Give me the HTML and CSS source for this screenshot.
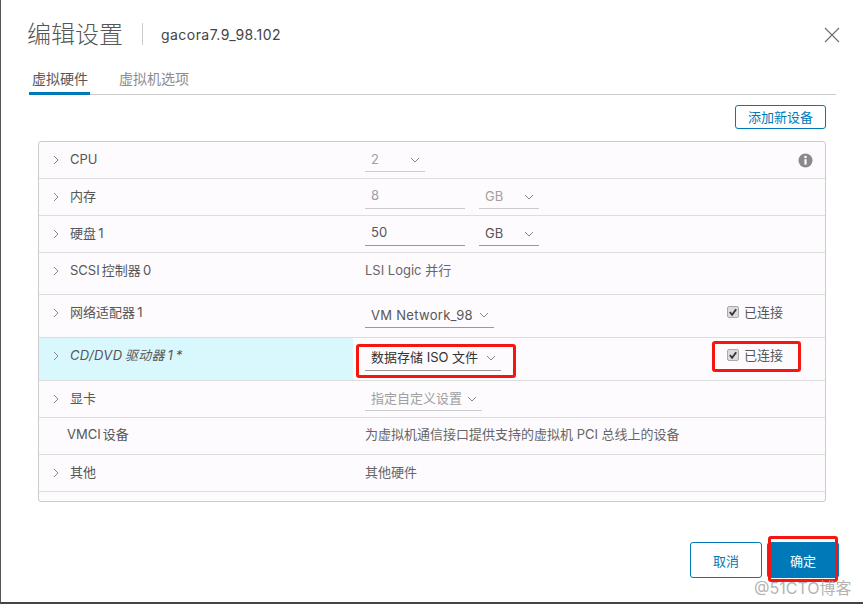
FILE: index.html
```html
<!DOCTYPE html>
<html lang="zh-CN">
<head>
<meta charset="utf-8">
<title>编辑设置</title>
<link rel="stylesheet" href="styles.css">
</head>
<body>
<div class="dialog">
  <header class="head">
    <h1 class="title">编辑设置</h1>
    <span class="vm">gacora7.9_98.102</span>
    <svg class="close" width="16" height="16" viewBox="0 0 16 16"><path d="M1 1L15 15M15 1L1 15" stroke="#6f6f6f" stroke-width="1.2" fill="none"/></svg>
  </header>
  <nav class="tabs">
    <span class="tab active">虚拟硬件</span>
    <span class="tab">虚拟机选项</span>
  </nav>
  <div class="toolbar"><button class="add">添加新设备</button></div>
  <section class="grid">
    <div class="row h37">
      <div class="label"><svg class="chev" viewBox="0 0 6 10"><path d="M1 1l4 4-4 4"/></svg>CPU</div>
      <div class="val"><span class="sel w60 dim">2<svg class="down" viewBox="0 0 10 6"><path d="M1 1l4 4 4-4"/></svg></span></div>
      <svg class="info" width="15" height="15" viewBox="0 0 15 15"><circle cx="7.5" cy="7.5" r="7" fill="#8a8a8a"/><rect x="6.4" y="6.2" width="2.2" height="5.4" fill="#fff"/><circle cx="7.5" cy="4" r="1.3" fill="#fff"/></svg>
    </div>
    <div class="row h37">
      <div class="label"><svg class="chev" viewBox="0 0 6 10"><path d="M1 1l4 4-4 4"/></svg>内存</div>
      <div class="val"><span class="inp dim">8</span><span class="sel w60 dim">GB<svg class="down" viewBox="0 0 10 6"><path d="M1 1l4 4 4-4"/></svg></span></div>
    </div>
    <div class="row h37">
      <div class="label"><svg class="chev" viewBox="0 0 6 10"><path d="M1 1l4 4-4 4"/></svg>硬盘 1</div>
      <div class="val"><span class="inp strong">50</span><span class="sel w60 strong">GB<svg class="down" viewBox="0 0 10 6"><path d="M1 1l4 4 4-4"/></svg></span></div>
    </div>
    <div class="row h42">
      <div class="label"><svg class="chev" viewBox="0 0 6 10"><path d="M1 1l4 4-4 4"/></svg>SCSI 控制器 0</div>
      <div class="val text">LSI Logic 并行</div>
    </div>
    <div class="row h43">
      <div class="label"><svg class="chev" viewBox="0 0 6 10"><path d="M1 1l4 4-4 4"/></svg>网络适配器 1</div>
      <div class="val"><span class="sel w129 strong">VM Network_98<svg class="down" viewBox="0 0 10 6"><path d="M1 1l4 4 4-4"/></svg></span></div>
      <label class="conn"><span class="box"><svg viewBox="0 0 11 11"><path d="M2 5.5l2.5 3L9 2.5"/></svg></span>已连接</label>
    </div>
    <div class="row h43 edited">
      <div class="label"><svg class="chev" viewBox="0 0 6 10"><path d="M1 1l4 4-4 4"/></svg>CD/DVD 驱动器 1 *</div>
      <div class="val"><span class="sel w136 black">数据存储 ISO 文件<svg class="down" viewBox="0 0 10 6"><path d="M1 1l4 4 4-4"/></svg></span></div>
      <label class="conn"><span class="box"><svg viewBox="0 0 11 11"><path d="M2 5.5l2.5 3L9 2.5"/></svg></span>已连接</label>
    </div>
    <div class="row h37">
      <div class="label"><svg class="chev" viewBox="0 0 6 10"><path d="M1 1l4 4-4 4"/></svg>显卡</div>
      <div class="val"><span class="sel w117 dim">指定自定义设置<svg class="down" viewBox="0 0 10 6"><path d="M1 1l4 4 4-4"/></svg></span></div>
    </div>
    <div class="row h37 vmci">
      <div class="label plain">VMCI 设备</div>
      <div class="val text">为虚拟机通信接口提供支持的虚拟机 PCI 总线上的设备</div>
    </div>
    <div class="row h37">
      <div class="label"><svg class="chev" viewBox="0 0 6 10"><path d="M1 1l4 4-4 4"/></svg>其他</div>
      <div class="val text">其他硬件</div>
    </div>
  </section>
  <footer class="foot">
    <button class="btn cancel">取消</button>
    <button class="btn ok">确定</button>
  </footer>
</div>
<div class="mark m1"></div>
<div class="mark m2"></div>
<div class="mark m3"></div>
<div class="wm">@51CTO博客</div>
</body>
</html>
```

FILE: styles.css
```css
* { box-sizing: border-box; }
html, body { margin: 0; padding: 0; }
body {
  width: 863px; height: 604px; overflow: hidden; position: relative;
  background: #fff;
  font-family: "Inter", "Noto Sans CJK SC", sans-serif;
  font-size: 13px; color: #565656;
}
.dialog {
  width: 863px; height: 604px;
  padding: 0 0 0 1px;
  border-left: 1px solid #555;
  border-bottom: 2px solid #444;
  display: flex; flex-direction: column;
}
.head { height: 68px; padding: 17px 23px 0 25px; display: flex; align-items: flex-start; }
.title {
  margin: 3px 0 0; padding-right: 20px; font-size: 24px; font-weight: 300; line-height: 30px; color: #565656;
  position: relative;
}
.title::after { content: ""; position: absolute; right: 0; top: 3px; width: 1px; height: 22px; background: #ccc; }
.vm { margin: 9px 0 0 18px; font-size: 14px; line-height: 17px; letter-spacing: 0.45px; color: #444; flex: 1; }
.close { margin-top: 10px; }
.tabs { height: 27px; margin: 0 0 0 27px; width: 807px; border-bottom: 1px solid #ccc; display: flex; }
.tab { margin-right: 27px; font-size: 14px; line-height: 21px; color: #8c8c8c; height: 27px; padding-left: 2px; white-space: nowrap; }
.tab.active { width: 61px; padding-left: 3px; color: #565656; border-bottom: 3px solid #0079b8; }
.toolbar { height: 46px; padding: 10px 37px 0 0; display: flex; justify-content: flex-end; align-items: flex-start; }
.add {
  width: 91px; height: 24px; background: #fff; border: 1px solid #0079b8; border-radius: 3px; padding: 0 0 2px;
  font: inherit; color: #0079b8;
}
.grid {
  margin-left: 36px; width: 788px; height: 361px;
  border: 1px solid #ccc; border-radius: 3px; background: #fdfbfe;
  display: flex; flex-direction: column;
}
.row { position: relative; display: flex; border-bottom: 1px solid #ddd; flex: none; }
.h37 { height: 37px; }
.h42 { height: 42px; }
.h43 { height: 43px; }
.label { width: 326px; padding: 9px 0 0 14px; display: flex; align-items: flex-start; line-height: 17px; color: #565656; white-space: pre; word-spacing: -1.5px; }
.label.plain { padding-left: 28px; }
.chev { width: 6px; height: 10px; margin: 4px 11px 0 0; flex: none; }
.chev path, .down path { fill: none; stroke: #888; stroke-width: 1; }
.val { display: flex; align-items: flex-start; gap: 14px; padding-top: 4px; }
.val.text { padding-top: 9px; line-height: 17px; color: #666; }
.vmci .label, .vmci .val.text { padding-top: 8px; }
.inp { display: block; width: 100px; height: 26px; padding: 4px 0 0 6px; border-bottom: 1px solid #aaa; line-height: 17px; }
.sel { position: relative; display: block; height: 26px; padding: 5px 0 0 6px; border-bottom: 1px solid #aaa; line-height: 17px; white-space: nowrap; }
.down { position: absolute; right: 5px; top: 11px; width: 10px; height: 6px; }
.w60 { width: 60px; }
.w129 { width: 129px; letter-spacing: 0.3px; }
.w136 { width: 136px; }
.w117 { width: 117px; }
.dim { color: #a0a0a0; border-bottom-color: #ccc; }
.strong { color: #565656; border-bottom-color: #999; }
.black { color: #333; border-bottom-color: #999; }
.h43 .val { padding-top: 6px; }
.h43 .sel { height: 27px; }
.h43 .w129 { padding-top: 6px; }
.edited { background: linear-gradient(90deg, #d9f8fd 0 314px, transparent 314px); }
.edited .label { font-style: italic; letter-spacing: 0.35px; }
.conn { position: absolute; left: 688px; top: 9px; display: flex; align-items: flex-start; line-height: 17px; color: #565656; }
.box { width: 12px; height: 12px; margin: 2px 5px 0 0; background: #dcdcdc; border: 1px solid #aaa; border-radius: 2px; display: block; }
.box svg { display: block; width: 10px; height: 10px; }
.box path { fill: none; stroke: #333; stroke-width: 2; }
.info { position: absolute; right: 12px; top: 11px; }
.foot { flex: 1; display: flex; justify-content: flex-end; gap: 5px; padding: 40px 24px 0 0; align-items: flex-start; }
.btn { width: 72px; height: 36px; border-radius: 3px; font: inherit; padding: 0; }
.cancel { background: #fff; border: 1px solid #0079b8; color: #0079b8; }
.ok { background: #0079b8; border: 1px solid #0079b8; color: #fff; }
.mark { position: absolute; border: 3px solid #f5170f; border-radius: 3px; }
.m1 { left: 356px; top: 344px; width: 160px; height: 34px; }
.m2 { left: 712px; top: 341px; width: 89px; height: 31px; }
.m3 { left: 768px; top: 536px; width: 70px; height: 46px; }
.wm { position: absolute; left: 754px; top: 575px; font-size: 16px; color: #a8a8a8; opacity: .85; white-space: nowrap; }
```
